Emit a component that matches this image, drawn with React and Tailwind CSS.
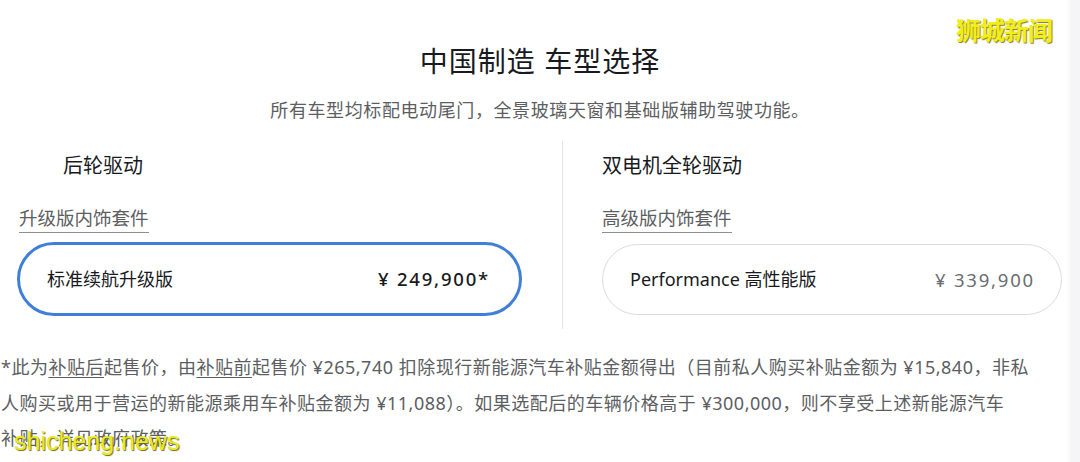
import React from "react";

const font = { fontFamily: '"Noto Sans", "Noto Sans CJK SC", sans-serif' };

function TrimCard({ name, price, selected }) {
  return (
    <div
      className={
        "flex items-center justify-between rounded-full bg-white " +
        (selected
          ? "h-[74px] border-[3px] border-[#3f7fda] pl-[27px] pr-[29px]"
          : "h-[71px] border border-[#dcdcde] pl-[27px] pr-[26px]")
      }
    >
      <span className="text-[18px] text-[#171a20]">{name}</span>
      <span
        className={
          "text-[18.5px] tracking-[1.8px] " + (selected ? "font-medium text-[#171a20]" : "text-[#6b6d70]")
        }
      >
        {price}
      </span>
    </div>
  );
}

export default function App() {
  return (
    <div
      className="relative h-[462px] w-[1080px] overflow-hidden bg-[linear-gradient(to_right,#ffffff_1066px,#f5f5f7_1071px)]"
      style={font}
    >
      {/* heading */}
      <div className="flex flex-col items-center pt-[41px]">
        <h1 className="text-[28px] leading-[40px] tracking-[1px] text-[#171a20]">中国制造 车型选择</h1>
        <p className="mt-[17px] text-[18px] leading-[24px] tracking-[0.6px] text-[#5c5e62]">
          所有车型均标配电动尾门，全景玻璃天窗和基础版辅助驾驶功能。
        </p>
      </div>

      {/* trims */}
      <div className="mt-[19px] flex">
        <div className="w-[562px] pt-[12px]">
          <div className="pl-[63px] text-[20px] leading-[26px] text-[#171a20]">后轮驱动</div>
          <div className="mt-[27px] pl-[19px]">
            <span className="border-b border-[#8e8e90] pb-[2px] text-[18.5px] leading-[24px] text-[#5c5e62]">升级版内饰套件</span>
          </div>
          <div className="mt-[11px] w-[505px] pl-[17px] box-content">
            <TrimCard name="标准续航升级版" price="¥ 249,900*" selected />
          </div>
        </div>
        <div className="h-[188px] w-px bg-[#e6e6e8]" />
        <div className="flex-1 pl-[39px] pr-[18px] pt-[12px]">
          <div className="text-[20px] leading-[26px] text-[#171a20]">双电机全轮驱动</div>
          <div className="mt-[27px]">
            <span className="border-b border-[#8e8e90] pb-[2px] text-[18.5px] leading-[24px] text-[#5c5e62]">高级版内饰套件</span>
          </div>
          <div className="mt-[13px]">
            <TrimCard name="Performance 高性能版" price="¥ 339,900" />
          </div>
        </div>
      </div>

      {/* footnote */}
      <div className="mt-[21px] pl-[1px] text-[18px] leading-[35.5px] tracking-[0.5px] text-[#5c5e62]">
        <div className="whitespace-nowrap">
          *此为<span className="underline underline-offset-[3px]">补贴后</span>起售价，由
          <span className="underline underline-offset-[3px]">补贴前</span>起售价 ¥265,740 扣除现行新能源汽车补贴金额得出（目前私人购买补贴金额为 ¥15,840，非私
        </div>
        <div className="whitespace-nowrap">人购买或用于营运的新能源乘用车补贴金额为 ¥11,088）。如果选配后的车辆价格高于 ¥300,000，则不享受上述新能源汽车</div>
        <div className="whitespace-nowrap">补贴，详见政府政策。</div>
      </div>

      {/* watermarks */}
      <div
        className="absolute right-[28px] top-[14px] text-[25px] font-bold leading-[30px] tracking-[-1px] text-[#f2ee1a] [text-shadow:1px_1px_1px_#7a7a20]"
        style={{ fontFamily: '"Noto Sans CJK SC", sans-serif' }}
      >
        狮城新闻
      </div>
      <div
        className="absolute bottom-[5px] left-[14px] text-[25px] leading-[32px] text-[#eaea1c] [text-shadow:1px_1px_1px_#6b6b20]"
        style={{ fontFamily: '"Liberation Sans", sans-serif' }}
      >
        shicheng.news
      </div>
    </div>
  );
}
